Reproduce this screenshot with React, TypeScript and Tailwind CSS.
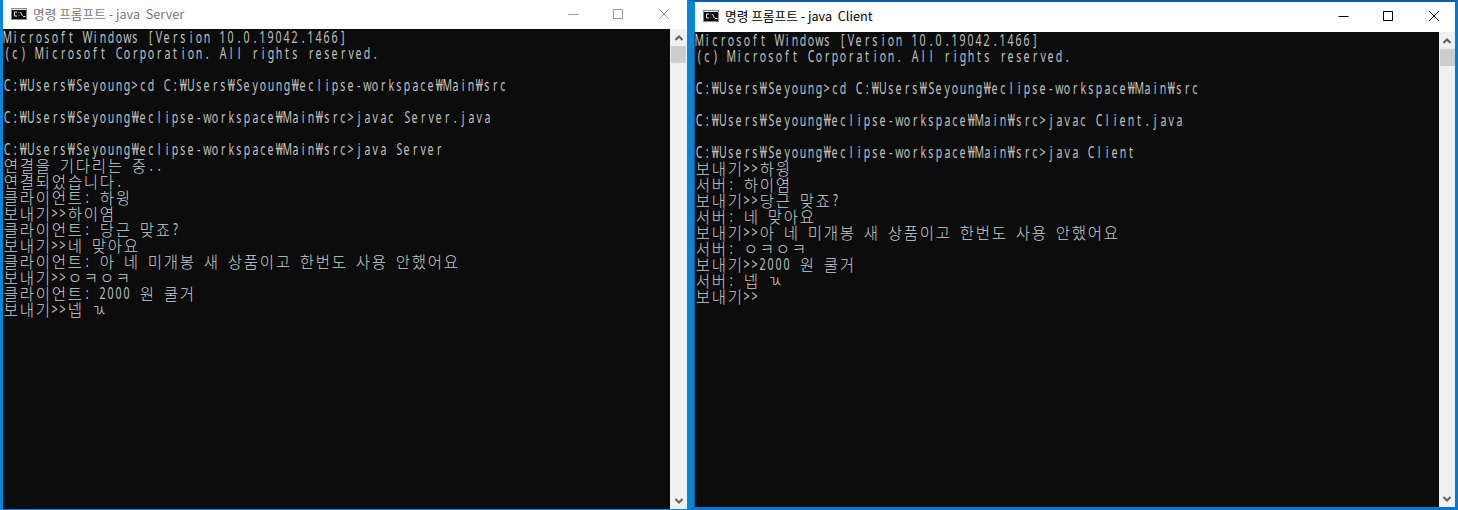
const SERVER_LINES = [
  "Microsoft Windows [Version 10.0.19042.1466]",
  "(c) Microsoft Corporation. All rights reserved.",
  "",
  "C:₩Users₩Seyoung>cd C:₩Users₩Seyoung₩eclipse-workspace₩Main₩src",
  "",
  "C:₩Users₩Seyoung₩eclipse-workspace₩Main₩src>javac Server.java",
  "",
  "C:₩Users₩Seyoung₩eclipse-workspace₩Main₩src>java Server",
  "연결을 기다리는 중..",
  "연결되었습니다.",
  "클라이언트: 하윙",
  "보내기>>하이염",
  "클라이언트: 당근 맞죠?",
  "보내기>>네 맞아요",
  "클라이언트: 아 네 미개봉 새 상품이고 한번도 사용 안했어요",
  "보내기>>ㅇㅋㅇㅋ",
  "클라이언트: 2000 원 쿨거",
  "보내기>>넵 ㄳ",
];

const CLIENT_LINES = [
  "Microsoft Windows [Version 10.0.19042.1466]",
  "(c) Microsoft Corporation. All rights reserved.",
  "",
  "C:₩Users₩Seyoung>cd C:₩Users₩Seyoung₩eclipse-workspace₩Main₩src",
  "",
  "C:₩Users₩Seyoung₩eclipse-workspace₩Main₩src>javac Client.java",
  "",
  "C:₩Users₩Seyoung₩eclipse-workspace₩Main₩src>java Client",
  "보내기>>하윙",
  "서버: 하이염",
  "보내기>>당근 맞죠?",
  "서버: 네 맞아요",
  "보내기>>아 네 미개봉 새 상품이고 한번도 사용 안했어요",
  "서버: ㅇㅋㅇㅋ",
  "보내기>>2000 원 쿨거",
  "서버: 넵 ㄳ",
  "보내기>>",
];

// console font is a fixed grid: hangul fills two cells, everything else one
function ConsoleLine({ text }: { text: string }) {
  return (
    <div className="flex h-4 whitespace-pre">
      {Array.from(text).map((ch, i) =>
        /[\u3131-\uD7A3]/.test(ch) ? (
          <span key={i} className="flex h-4 w-4 shrink-0 items-center justify-center font-['Noto_Sans_CJK_KR',sans-serif] text-[15.5px] leading-4 font-light">
            {ch}
          </span>
        ) : (
          <span key={i} className="flex h-4 w-2 shrink-0 items-center justify-center">
            <span className="inline-block scale-x-[0.66] font-['Noto_Sans',sans-serif] text-[16px] leading-4 font-normal text-[#c0c0c0]">{ch}</span>
          </span>
        )
      )}
    </div>
  );
}

function CmdIcon() {
  return (
    <svg width="16" height="12" viewBox="0 0 16 12" className="shrink-0">
      <rect x="0" y="0" width="16" height="12" fill="#8a8a8a" />
      <rect x="1" y="1" width="14" height="1" fill="#e8e8e8" />
      <rect x="1" y="2" width="14" height="9" fill="#0c0c0c" />
      <path d="M6 4H3.5V8H6M8 4.5V5M8 7V7.5M9.5 4L11.5 8M12 8.5H14.5" stroke="#e6e6e6" strokeWidth="1" fill="none" />
    </svg>
  );
}

function WindowButtons({ color }: { color: string }) {
  return (
    <svg width="112" height="14" viewBox="0 0 112 14" className="shrink-0">
      <path d="M0.5 7.5H10.5" stroke={color} strokeWidth="1" />
      <rect x="45.5" y="2.5" width="9" height="9" fill="none" stroke={color} strokeWidth="1" />
      <path d="M91 2L101 12M101 2L91 12" stroke={color} strokeWidth="1" />
    </svg>
  );
}

function ScrollArrow({ up }: { up?: boolean }) {
  return (
    <div className="flex h-[17px] items-center justify-center">
      <svg width="8" height="6" viewBox="0 0 8 6">
        <path d={up ? "M0.5 5L4 1.5L7.5 5" : "M0.5 1L4 4.5L7.5 1"} fill="none" stroke="#606060" strokeWidth="2" />
      </svg>
    </div>
  );
}

function Scrollbar({ wide }: { wide?: boolean }) {
  return (
    <div className={`flex shrink-0 flex-col bg-[#f0f0f0] ${wide ? "w-[17px]" : "w-4"}`}>
      <ScrollArrow up />
      <div className={`h-[17px] bg-[#cdcdcd] ${wide ? "mx-px" : "ml-px"}`} />
      <div className="flex-1" />
      <ScrollArrow />
    </div>
  );
}

function Terminal({ lines }: { lines: string[] }) {
  return (
    <div className="min-w-0 flex-1 overflow-hidden bg-[#0c0c0c] text-[#cccccc]">
      {lines.map((line, i) => (
        <ConsoleLine key={i} text={line} />
      ))}
    </div>
  );
}

export default function App() {
  return (
    <div className="flex h-[510px] w-[1458px] overflow-hidden bg-white font-['Noto_Sans_CJK_KR',sans-serif]">
      {/* Server window, not focused */}
      <div className="flex w-[687px] shrink-0 flex-col border-b border-l-[3px] border-[#0a86d8]">
        <div className="flex h-[29px] shrink-0 items-center bg-white pr-[7px] pb-px pl-2">
          <CmdIcon />
          <span className="ml-[6px] flex-1 text-[12.7px] whitespace-pre text-[#7a7a7a]">명령 프롬프트 - java  Server</span>
          <WindowButtons color="#999999" />
        </div>
        <div className="flex min-h-0 flex-1">
          <Terminal lines={SERVER_LINES} />
          <Scrollbar wide />
        </div>
      </div>

      {/* Client window, focused */}
      <div className="flex w-[771px] shrink-0 flex-col border-t-2 border-r-[3px] border-b-[3px] border-l-8 border-t-[#0f5fa8] border-r-[#0a78c8] border-b-[#0a78c8] border-l-[#0a86d8]">
        <div className="flex h-[30px] shrink-0 items-center bg-white pr-[5px] pb-[2px] pl-2">
          <CmdIcon />
          <span className="ml-[6px] flex-1 text-[12.7px] whitespace-pre text-black">명령 프롬프트 - java  Client</span>
          <WindowButtons color="#000000" />
        </div>
        <div className="flex min-h-0 flex-1 shadow-[-1px_0_0_#0f5a90]">
          <Terminal lines={CLIENT_LINES} />
          <Scrollbar />
        </div>
      </div>
    </div>
  );
}
